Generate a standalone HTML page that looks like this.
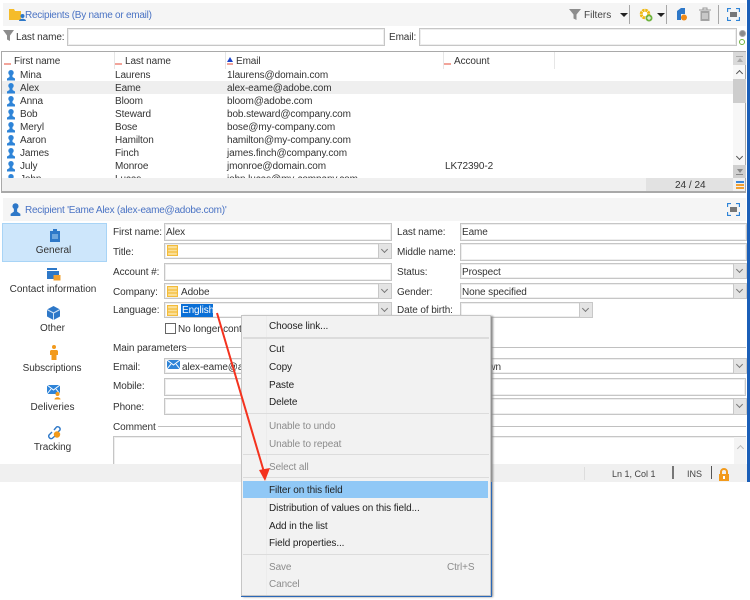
<!DOCTYPE html>
<html><head><meta charset="utf-8">
<style>
html,body{margin:0;padding:0;background:#fff}
#p{position:relative;width:750px;height:600px;overflow:hidden;background:#fff;font:10px/13px "Liberation Sans",sans-serif;letter-spacing:-.1px;color:#333}
#p div,#p svg{position:absolute}
.t{white-space:nowrap;margin-top:1px}
.r{position:absolute;white-space:nowrap;margin-top:1px}
.c{letter-spacing:0}
.i{background:#fff;border:1px solid #c6c6c6;box-shadow:inset 0 0 0 1px #eee;box-sizing:border-box}
.d{background:#e4e4e4;border:1px solid #c8c8c8;box-sizing:border-box;width:14px}
.d:after{content:"";position:absolute;left:3px;top:3px;width:4px;height:4px;border:solid #777;border-width:0 1px 1px 0;transform:rotate(45deg)}
.m{color:#222;left:269px}
.g{color:#8c8c8c;left:269px}
.s{left:243px;height:1px;background:#dcdcdc;width:246px}
</style></head><body><div id="p">

<!-- top panel -->
<div style="left:3px;top:3px;width:743px;height:23px;background:#f5f5f5"></div>
<svg style="left:8px;top:8px" width="18" height="13" viewBox="0 0 18 13"><path d="M1 1h5l1 2h6v9H1z" fill="#f5bc2a"/><circle cx="14.500" cy="8" r="2" fill="#2e78c8"/><path d="M11 13c0-3 7-3 7 0z" fill="#2e78c8"/></svg>
<div class="t" style="left:25px;top:8px;color:#4a73c4;letter-spacing:-.25px">Recipients (By name or email)</div>
<svg style="left:569px;top:8px" width="12" height="13" viewBox="0 0 12 13"><path d="M0 1h12L7.500 6.500V12l-3-1.500v-4z" fill="#8d8d8d"/></svg>
<div class="t c" style="left:584px;top:8px;color:#444">Filters</div>
<div style="left:620px;top:13px;border:4px solid transparent;border-top:4px solid #222;border-bottom:0"></div>
<div style="left:629px;top:5px;width:1px;height:19px;background:#a8a8a8"></div>
<svg style="left:639px;top:8px" width="14" height="14" viewBox="0 0 14 14"><circle cx="6" cy="6" r="3.800" fill="#fff" stroke="#efb810" stroke-width="3" stroke-dasharray="2.400 .6"/><circle cx="10" cy="10" r="3.500" fill="#6fb33f"/><path d="M8 10h4M10 8v4" stroke="#fff"/></svg>
<div style="left:657px;top:13px;border:4px solid transparent;border-top:4px solid #222;border-bottom:0"></div>
<div style="left:666px;top:5px;width:1px;height:19px;background:#a8a8a8"></div>
<svg style="left:676px;top:7px" width="11" height="14" viewBox="0 0 11 14"><path d="M1 4l4-3h4v6H5v6H1z" fill="#2e78c8"/><circle cx="8" cy="10.500" r="3" fill="#f08a16"/></svg>
<svg style="left:699px;top:7px" width="12" height="14" viewBox="0 0 12 14"><path d="M0 3h12M4 3V1h4v2" stroke="#999" fill="none"/><path d="M1.500 4h9v10h-9z" fill="#a3a3a3"/><path d="M4 6v6M6 6v6M8 6v6" stroke="#eee"/></svg>
<div style="left:718px;top:5px;width:1px;height:19px;background:#a8a8a8"></div>
<svg style="left:727px;top:8px" width="13" height="13" viewBox="0 0 13 13"><path d="M.5 4V.5H4M9 .5h3.500V4M12.500 9v3.500H9M4 12.500H.5V9" fill="none" stroke="#2e84d8" stroke-width="1.300"/><rect x="3" y="4" width="7" height="5" fill="#777"/></svg>

<!-- filter row -->
<svg style="left:3px;top:29px" width="11" height="13" viewBox="0 0 11 13"><path d="M0 1h11L7 6.500V12L4 10.500v-4z" fill="#8d8d8d"/></svg>
<div class="t" style="left:16px;top:30px">Last name:</div>
<div class="i" style="left:67px;top:28px;width:318px;height:18px"></div>
<div class="t" style="left:389px;top:30px">Email:</div>
<div class="i" style="left:419px;top:28px;width:318px;height:18px"></div>
<div style="left:739px;top:30px;width:5px;height:5px;border-radius:50%;background:#8a8a8a;border:1px solid #aaa"></div>
<div style="left:739px;top:39px;width:4px;height:4px;border-radius:50%;border:1.500px solid #6fb33f"></div>

<!-- list -->
<div style="left:1px;top:51px;width:745px;height:142px;border:1px solid #a9a9a9;border-width:1px 1px 2px 1px;box-sizing:border-box;background:#fff;overflow:hidden">
 <div style="left:0;top:29px;width:731px;height:13px;background:#efefef"></div>
 <div style="left:112px;top:0;width:1px;height:17px;background:#e6e6e6"></div>
 <div style="left:223px;top:0;width:1px;height:17px;background:#e6e6e6"></div>
 <div style="left:441px;top:0;width:1px;height:17px;background:#e6e6e6"></div>
 <div style="left:552px;top:0;width:1px;height:17px;background:#e6e6e6"></div>
</div>
<div style="left:4px;top:63px;width:7px;height:2px;background:#f2a49a"></div>
<div style="left:115px;top:63px;width:7px;height:2px;background:#f2a49a"></div>
<div style="left:444px;top:63px;width:7px;height:2px;background:#f2a49a"></div>
<div style="left:227px;top:63px;width:6px;height:2px;background:#f2a49a"></div>
<div style="left:227px;top:57px;border:3px solid transparent;border-bottom:5px solid #1d44c8;border-top:0"></div>
<div class="t" style="left:14px;top:54px">First name</div>
<div class="t" style="left:125px;top:54px">Last name</div>
<div class="t" style="left:236px;top:54px">Email</div>
<div class="t" style="left:454px;top:54px">Account</div>

<div class="r" style="left:20px;top:68px">Mina</div><div class="r" style="left:115px;top:68px">Laurens</div><div class="r" style="left:227px;top:68px">1laurens@domain.com</div>
<div class="r" style="left:20px;top:81px">Alex</div><div class="r" style="left:115px;top:81px">Eame</div><div class="r" style="left:227px;top:81px">alex-eame@adobe.com</div>
<div class="r" style="left:20px;top:94px">Anna</div><div class="r" style="left:115px;top:94px">Bloom</div><div class="r" style="left:227px;top:94px">bloom@adobe.com</div>
<div class="r" style="left:20px;top:107px">Bob</div><div class="r" style="left:115px;top:107px">Steward</div><div class="r" style="left:227px;top:107px">bob.steward@company.com</div>
<div class="r" style="left:20px;top:120px">Meryl</div><div class="r" style="left:115px;top:120px">Bose</div><div class="r" style="left:227px;top:120px">bose@my-company.com</div>
<div class="r" style="left:20px;top:133px">Aaron</div><div class="r" style="left:115px;top:133px">Hamilton</div><div class="r" style="left:227px;top:133px">hamilton@my-company.com</div>
<div class="r" style="left:20px;top:146px">James</div><div class="r" style="left:115px;top:146px">Finch</div><div class="r" style="left:227px;top:146px">james.finch@company.com</div>
<div class="r" style="left:20px;top:159px">July</div><div class="r" style="left:115px;top:159px">Monroe</div><div class="r" style="left:227px;top:159px">jmonroe@domain.com</div><div class="r" style="left:445px;top:159px">LK72390-2</div>
<div class="r" style="left:20px;top:172px">John</div><div class="r" style="left:115px;top:172px">Lucas</div><div class="r" style="left:227px;top:172px">john.lucas@my-company.com</div>

<svg style="left:6px;top:70px" width="10" height="108" viewBox="0 0 10 108" fill="#2e84d8">
<g id="u"><circle cx="5" cy="2.700" r="2.700"/><path d="M3.500 4.500h3v2.500l2.500 1.500v2H1v-2l2.500-1.500z"/></g>
<use href="#u" y="13"/><use href="#u" y="26"/><use href="#u" y="39"/><use href="#u" y="52"/><use href="#u" y="65"/><use href="#u" y="78"/><use href="#u" y="91"/><use href="#u" y="104"/></svg>

<!-- scrollbar -->
<div style="left:733px;top:52px;width:12px;height:126px;background:#f7f7f7"></div>
<div style="left:733px;top:52px;width:13px;height:13px;background:#d9d9d9"></div>
<div style="left:733px;top:79px;width:13px;height:24px;background:#cdcdcd"></div>
<div style="left:733px;top:165px;width:13px;height:13px;background:#d0d0d0"></div>
<div style="left:737px;top:71px;width:4px;height:4px;border:solid #555;border-width:1px 0 0 1px;transform:rotate(45deg)"></div>
<div style="left:737px;top:154px;width:4px;height:4px;border:solid #555;border-width:0 1px 1px 0;transform:rotate(45deg)"></div>
<div style="left:736px;top:56px;width:7px;height:1px;background:#aaa"></div>
<div style="left:737px;top:58px;border:3px solid transparent;border-bottom:4px solid #aaa;border-top:0"></div>
<div style="left:737px;top:169px;border:3px solid transparent;border-top:4px solid #888;border-bottom:0"></div>
<div style="left:736px;top:174px;width:7px;height:1px;background:#888"></div>

<!-- list footer -->
<div style="left:2px;top:178px;width:743px;height:13px;background:#f0f0f0"></div>
<div style="left:646px;top:178px;width:87px;height:13px;background:#e2e2e2"></div>
<div class="t c" style="left:675px;top:178px">24 / 24</div>
<div style="left:736px;top:181px;width:8px;height:2px;background:#3a86d8"></div>
<div style="left:736px;top:184px;width:8px;height:1.500px;background:#f2a030"></div>
<div style="left:736px;top:187px;width:8px;height:1.500px;background:#f2a030"></div>

<!-- detail header -->
<div style="left:3px;top:198px;width:743px;height:23px;background:#f5f5f5"></div>
<svg style="left:10px;top:203px" width="11" height="13" viewBox="0 0 10 12" fill="#2e78c8"><circle cx="5" cy="3" r="2.800"/><path d="M3.500 5h3v3l3 2v2H.5v-2l3-2z"/></svg>
<div class="t" style="left:25px;top:203px;color:#4a73c4;letter-spacing:-.24px">Recipient 'Eame Alex (alex-eame@adobe.com)'</div>
<svg style="left:727px;top:203px" width="13" height="13" viewBox="0 0 13 13"><path d="M.5 4V.5H4M9 .5h3.500V4M12.500 9v3.500H9M4 12.500H.5V9" fill="none" stroke="#2e84d8" stroke-width="1.300"/><rect x="3" y="4" width="7" height="5" fill="#777"/></svg>

<!-- sidebar -->
<div style="left:2px;top:223px;width:105px;height:39px;background:#cde6fb;border:1px solid #a8d4f6;box-sizing:border-box"></div>
<svg style="left:49px;top:228px" width="12" height="15" viewBox="0 0 12 15"><path d="M1 3h3V1h4v2h3v11H1z" fill="#2e78c8"/><rect x="3" y="6" width="6" height="5" fill="#6fa6dc"/></svg>
<div class="t c" style="left:0;width:107px;text-align:center;top:243px">General</div>
<svg style="left:47px;top:267px" width="14" height="14" viewBox="0 0 14 14"><path d="M0 1h10v2H0z" fill="#2e78c8"/><path d="M0 4h12v8H0z" fill="#2e78c8"/><rect x="6.500" y="8" width="7" height="5.500" fill="#f2a030"/></svg>
<div class="t c" style="left:0;width:106px;text-align:center;top:282px">Contact information</div>
<svg style="left:47px;top:306px" width="13" height="14" viewBox="0 0 13 14"><path d="M6.500 0L13 3.500v7L6.500 14 0 10.500v-7z" fill="#2e78c8"/><path d="M0 3.500l6.500 3.500L13 3.500M6.500 7v7" stroke="#cfe2f6" fill="none"/></svg>
<div class="t c" style="left:0;width:105px;text-align:center;top:321px">Other</div>
<svg style="left:50px;top:345px" width="8" height="15" viewBox="0 0 8 15" fill="#f29a1c"><circle cx="4" cy="2" r="2"/><path d="M1 5h6l1 1v4H6.500v5h-5v-5H0V6z"/></svg>
<div class="t" style="left:0;width:104px;text-align:center;top:361px">Subscriptions</div>
<svg style="left:47px;top:385px" width="15" height="15" viewBox="0 0 15 15"><rect x="0" y="0" width="13" height="9" fill="#2e84d8"/><path d="M0 0l6.500 5L13 0M0 9l4-5M13 9L9 4" stroke="#fff" fill="none"/><circle cx="10.500" cy="9" r="2" fill="#f29a1c"/><path d="M7.500 14.500c0-3 6-3 6 0z" fill="#f29a1c"/></svg>
<div class="t c" style="left:0;width:105px;text-align:center;top:400px">Deliveries</div>
<svg style="left:47px;top:425px" width="15" height="15" viewBox="0 0 15 15"><path d="M5 7L2 10a2.500 2.500 0 0 0 3 3.500L8 11M7 5l2.500-3a2.500 2.500 0 0 1 3.500 3l-2 2" fill="none" stroke="#2e78c8" stroke-width="1.400"/><circle cx="10" cy="9.500" r="3.200" fill="#f29a1c"/></svg>
<div class="t" style="left:0;width:105px;text-align:center;top:440px">Tracking</div>

<!-- form labels -->
<div class="t" style="left:113px;top:225px">First name:</div>
<div class="t" style="left:113px;top:245px">Title:</div>
<div class="t" style="left:113px;top:265px">Account #:</div>
<div class="t" style="left:113px;top:285px">Company:</div>
<div class="t" style="left:113px;top:303px">Language:</div>
<div class="t" style="left:113px;top:341px">Main parameters</div>
<div style="left:186px;top:347px;width:560px;height:1px;background:#c0c0c0"></div>
<div class="t" style="left:113px;top:360px">Email:</div>
<div class="t" style="left:113px;top:379px">Mobile:</div>
<div class="t" style="left:113px;top:400px">Phone:</div>
<div class="t" style="left:113px;top:420px">Comment</div>
<div style="left:158px;top:426px;width:588px;height:1px;background:#c0c0c0"></div>

<div class="i" style="left:164px;top:223px;width:228px;height:18px"></div>
<div class="t" style="left:166px;top:225px">Alex</div>
<div class="i" style="left:164px;top:243px;width:228px;height:16px"></div><div class="d" style="left:378px;top:243px;height:16px"></div>
<div class="i" style="left:164px;top:263px;width:228px;height:18px"></div>
<div class="i" style="left:164px;top:283px;width:228px;height:16px"></div><div class="d" style="left:378px;top:283px;height:16px"></div>
<div class="t" style="left:181px;top:285px">Adobe</div>
<div class="i" style="left:164px;top:302px;width:228px;height:16px"></div><div class="d" style="left:378px;top:302px;height:16px"></div>
<div style="left:181px;top:304px;width:32px;height:13px;background:#0a6fd6"></div>
<div class="t" style="left:182px;top:303px;color:#fff">English</div>
<svg style="left:167px;top:245px" width="11" height="11" viewBox="0 0 11 11"><rect x=".5" y=".5" width="10" height="10" fill="#fbe09a" stroke="#f3bc3a" stroke-width="1.200"/><path d="M1 4h9M1 7h9" stroke="#f3bc3a" stroke-width="1.200"/></svg>
<svg style="left:167px;top:286px" width="11" height="11" viewBox="0 0 11 11"><rect x=".5" y=".5" width="10" height="10" fill="#fbe09a" stroke="#f3bc3a" stroke-width="1.200"/><path d="M1 4h9M1 7h9" stroke="#f3bc3a" stroke-width="1.200"/></svg>
<svg style="left:167px;top:305px" width="11" height="11" viewBox="0 0 11 11"><rect x=".5" y=".5" width="10" height="10" fill="#fbe09a" stroke="#f3bc3a" stroke-width="1.200"/><path d="M1 4h9M1 7h9" stroke="#f3bc3a" stroke-width="1.200"/></svg>

<div style="left:165px;top:323px;width:11px;height:11px;box-sizing:border-box;border:1px solid #666;background:#fff"></div>
<div class="t" style="left:178px;top:322px">No longer contact</div>

<div class="i" style="left:164px;top:358px;width:582px;height:16px"></div><div class="d" style="left:733px;top:358px;height:16px"></div>
<svg style="left:167px;top:360px" width="13" height="9" viewBox="0 0 13 9"><rect width="13" height="9" fill="#2e84d8"/><path d="M0 0l6.500 5L13 0M0 9l4-5M13 9L9 4" stroke="#fff" fill="none"/></svg>
<div class="t" style="left:182px;top:360px">alex-eame@adobe.com</div>
<div class="t" style="left:460px;top:360px">Unknown</div>
<div class="i" style="left:164px;top:378px;width:582px;height:18px"></div>
<div class="i" style="left:164px;top:398px;width:582px;height:17px"></div><div class="d" style="left:733px;top:398px;height:17px"></div>
<div class="i" style="left:113px;top:436px;width:633px;height:30px"></div>
<div style="left:734px;top:437px;width:12px;height:28px;background:#f4f4f4"></div>
<div style="left:738px;top:446px;width:4px;height:4px;border:solid #bbb;border-width:1px 0 0 1px;transform:rotate(45deg)"></div>

<div class="t" style="left:397px;top:225px">Last name:</div>
<div class="t" style="left:397px;top:245px">Middle name:</div>
<div class="t" style="left:397px;top:265px">Status:</div>
<div class="t" style="left:397px;top:285px">Gender:</div>
<div class="t" style="left:397px;top:303px">Date of birth:</div>

<div class="i" style="left:460px;top:223px;width:287px;height:18px"></div>
<div class="t" style="left:462px;top:225px">Eame</div>
<div class="i" style="left:460px;top:243px;width:287px;height:18px"></div>
<div class="i" style="left:460px;top:263px;width:287px;height:16px"></div><div class="d" style="left:733px;top:263px;height:16px"></div>
<div class="t" style="left:462px;top:265px">Prospect</div>
<div class="i" style="left:460px;top:283px;width:287px;height:16px"></div><div class="d" style="left:733px;top:283px;height:16px"></div>
<div class="t" style="left:462px;top:285px">None specified</div>
<div class="i" style="left:460px;top:302px;width:133px;height:16px"></div><div class="d" style="left:579px;top:302px;height:16px"></div>

<!-- status bar -->
<div style="left:0;top:464px;width:747px;height:18px;background:#f0f0f0"></div>
<div style="left:584px;top:467px;width:1px;height:13px;background:#ddd"></div>
<div class="t" style="left:612px;top:467px;font-size:9px;letter-spacing:0;color:#444">Ln 1, Col 1</div>
<div style="left:672px;top:466px;width:2px;height:13px;background:#777"></div>
<div class="t" style="left:687px;top:467px;font-size:9px;letter-spacing:0;color:#444">INS</div>
<div style="left:711px;top:466px;width:1px;height:13px;background:#555"></div>
<svg style="left:718px;top:468px" width="12" height="13" viewBox="0 0 12 13"><path d="M3 6V4a3 3 0 0 1 6 0v2" fill="none" stroke="#f29a1c" stroke-width="2"/><rect x="1" y="6" width="10" height="7" fill="#f29a1c"/><rect x="5" y="8" width="2" height="3" fill="#fff"/></svg>
<div style="left:747px;top:0;width:3px;height:482px;background:#1b5fb8"></div>

<!-- context menu -->
<div style="left:241px;top:315px;width:250px;height:281px;background:#f2f2f2;border:1px solid #c6c6c6;box-sizing:border-box;box-shadow:2px 1px 2px #8a8a8a"></div>
<div style="left:241px;top:596px;width:251px;height:1px;background:#2a68b8"></div>
<div style="left:491px;top:482px;width:1px;height:115px;background:#2a68b8"></div>
<div style="left:266px;top:316px;width:1px;height:279px;background:#ececec"></div>
<div class="t m" style="top:319px">Choose link...</div>
<div class="s" style="top:337px;height:2px"></div>
<div class="t m" style="top:342px">Cut</div>
<div class="t m" style="top:360px">Copy</div>
<div class="t m" style="top:378px">Paste</div>
<div class="t m" style="top:395px">Delete</div>
<div class="s" style="top:413px"></div>
<div class="t g" style="top:419px">Unable to undo</div>
<div class="t g" style="top:437px">Unable to repeat</div>
<div class="s" style="top:454px"></div>
<div class="t g" style="top:460px">Select all</div>
<div class="s" style="top:477px"></div>
<div style="left:243px;top:481px;width:245px;height:17px;background:#90c8f6"></div>
<div class="t m" style="top:483px">Filter on this field</div>
<div class="t m" style="top:501px">Distribution of values on this field...</div>
<div class="t m" style="top:519px">Add in the list</div>
<div class="t m" style="top:536px">Field properties...</div>
<div class="s" style="top:554px"></div>
<div class="t g" style="top:560px">Save</div>
<div class="t g" style="top:560px;left:447px">Ctrl+S</div>
<div class="t g" style="top:577px">Cancel</div>

<!-- arrow -->
<svg style="left:210px;top:305px" width="70" height="180" viewBox="0 0 70 180"><path d="M7 8L54 167" stroke="#f4321e" stroke-width="2" fill="none"/><path d="M49 165L60 163 55 176z" fill="#f4321e"/></svg>
</div></body></html>
